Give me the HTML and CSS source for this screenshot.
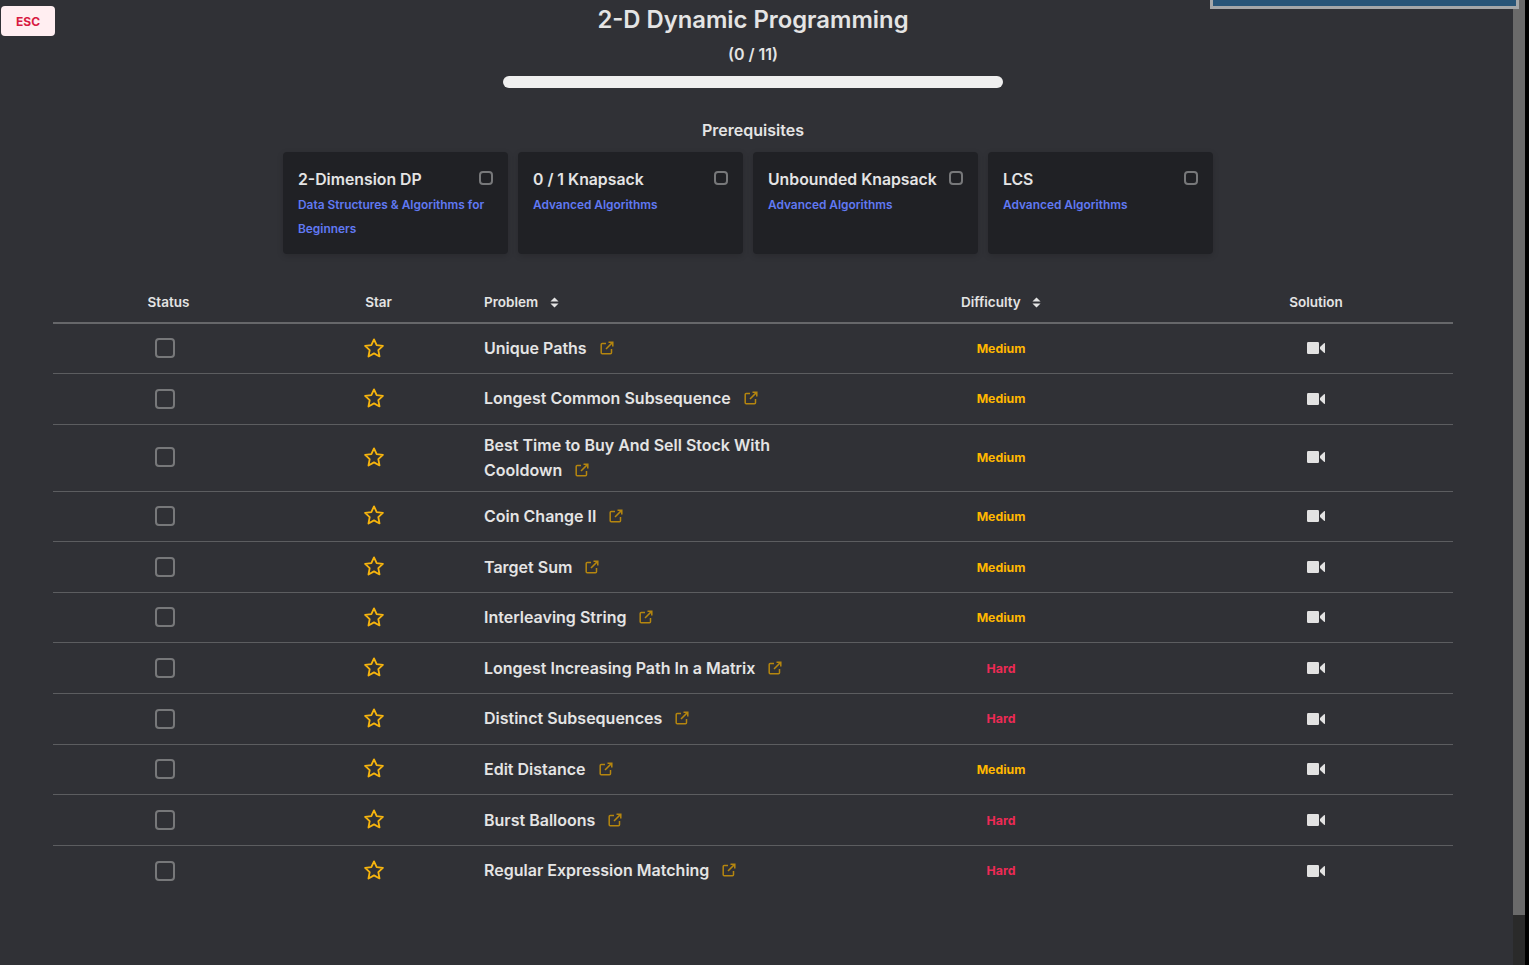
FILE: index.html
```html
<!DOCTYPE html>
<html>
<head>
    <title>2-D Dynamic Programming</title>
    <link rel="stylesheet" href="styles.css">
</head>

<body>
    <button class="esc">ESC</button>

    <div id="main">
        <h1 class="title">2-D Dynamic Programming</h1>
        <div class="count">(0 / 11)</div>
        <div class="progress"></div>

        <h2 class="prereq-title">Prerequisites</h2>
        <div id="prereqs">
            <div class="prereq">
                <div class="prereq-name">2-Dimension DP</div>
                <a class="prereq-course">Data Structures &amp; Algorithms for Beginners</a>
                <span class="prereq-check"></span>
            </div>
            <div class="prereq">
                <div class="prereq-name">0 / 1 Knapsack</div>
                <a class="prereq-course">Advanced Algorithms</a>
                <span class="prereq-check"></span>
            </div>
            <div class="prereq">
                <div class="prereq-name">Unbounded Knapsack</div>
                <a class="prereq-course">Advanced Algorithms</a>
                <span class="prereq-check"></span>
            </div>
            <div class="prereq">
                <div class="prereq-name">LCS</div>
                <a class="prereq-course">Advanced Algorithms</a>
                <span class="prereq-check"></span>
            </div>
        </div>

        <table id="problems">
            <colgroup>
                <col class="col-status">
                <col class="col-star">
                <col class="col-problem">
                <col class="col-difficulty">
                <col class="col-solution">
            </colgroup>
            <thead>
                <tr>
                    <th>Status</th>
                    <th>Star</th>
                    <th class="left">Problem <svg class="sort" viewBox="0 0 10 12"><path d="M5 0.500 9.500 5H0.500zM5 11.500 0.500 7H9.500z"/></svg></th>
                    <th>Difficulty <svg class="sort" viewBox="0 0 10 12"><path d="M5 0.500 9.500 5H0.500zM5 11.500 0.500 7H9.500z"/></svg></th>
                    <th>Solution</th>
                </tr>
            </thead>
            <tbody id="rows"></tbody>
        </table>
    </div>

    <div class="scrollbar"><div class="scrollbar-thumb"></div></div>
    <div class="video-box"></div>

    <script>
        const problems = [
            ["Unique Paths", "Medium"],
            ["Longest Common Subsequence", "Medium"],
            ["Best Time to Buy And Sell Stock With Cooldown", "Medium"],
            ["Coin Change II", "Medium"],
            ["Target Sum", "Medium"],
            ["Interleaving String", "Medium"],
            ["Longest Increasing Path In a Matrix", "Hard"],
            ["Distinct Subsequences", "Hard"],
            ["Edit Distance", "Medium"],
            ["Burst Balloons", "Hard"],
            ["Regular Expression Matching", "Hard"]
        ]

        const star = `<svg class="star" viewBox="0 0 24 24"><path d="M12 2.600l2.900 6.200 6.800.9-5 4.700 1.300 6.800-6-3.300-6 3.300 1.300-6.800-5-4.700 6.800-.9z"/></svg>`
        const link = `<svg class="link" viewBox="0 0 14 14"><path d="M6 2.500H2.200a1 1 0 0 0-1 1v8.300a1 1 0 0 0 1 1h8.300a1 1 0 0 0 1-1V8"/><path d="M8.500 1.200h4.300v4.300M12.600 1.400 6 8"/></svg>`
        const video = `<svg class="video" viewBox="0 0 18 12"><rect width="12" height="12" rx="1.200"/><path d="M13 5 17 1.200a.6.6 0 0 1 1 .4v8.800a.6.6 0 0 1-1 .4L13 7z"/></svg>`

        rows.innerHTML = problems.map(([name, level]) => `
            <tr>
                <td><span class="check"></span></td>
                <td>${star}</td>
                <td class="left"><span class="problem">${name}</span>${link}</td>
                <td><span class="level ${level.toLowerCase()}">${level}</span></td>
                <td>${video}</td>
            </tr>
        `).join('')
    </script>
</body>
</html>
```

FILE: styles.css
```css
html, body {
    height: 100%;
}

body {
    margin: 0;
    overflow: hidden;
    font-family: Inter, "Liberation Sans", sans-serif;
    background-color: #303136;
    color: #e4e4e4;
}

#main {
    display: flex;
    flex-direction: column;
    align-items: center;
    width: 1506px;
}

.esc {
    position: absolute;
    left: 1px;
    top: 6px;
    width: 54px;
    height: 30px;
    padding: 0;
    border: none;
    border-radius: 4px;
    background-color: #ffeef1;
    color: #d81a42;
    font-family: inherit;
    font-size: 12px;
    font-weight: 700;
}

.video-box {
    position: absolute;
    left: 1210px;
    top: -22px;
    box-sizing: border-box;
    width: 309px;
    height: 31px;
    border: 3px solid #a5a7a9;
    background-color: #285578;
}

.title {
    margin: 5px 0 0;
    font-size: 23.800px;
    line-height: 30px;
    font-weight: 600;
}

.count {
    margin-top: 10px;
    font-size: 16px;
    line-height: 19px;
    font-weight: 600;
}

.progress {
    width: 500px;
    height: 12px;
    margin-top: 12px;
    border-radius: 6px;
    background-color: #efefef;
}

.prereq-title {
    margin: 32px 0 0;
    font-size: 16px;
    line-height: 20px;
    font-weight: 600;
}

#prereqs {
    display: flex;
    column-gap: 10px;
    margin-top: 12px;
    margin-right: 10px;
}

.prereq {
    position: relative;
    box-sizing: border-box;
    width: 225px;
    height: 102px;
    padding: 15px;
    border-radius: 4px;
    background-color: #202125;
    box-shadow: 0 2px 6px rgba(0, 0, 0, 0.15);
}

.prereq-name {
    font-size: 15.800px;
    line-height: 25px;
    font-weight: 600;
}

.prereq-course {
    display: block;
    margin-top: 1px;
    font-size: 11.900px;
    line-height: 24px;
    font-weight: 600;
    color: #6079f3;
}

.prereq-check {
    position: absolute;
    top: 19px;
    right: 15px;
    box-sizing: border-box;
    width: 14px;
    height: 14px;
    border: 2px solid #77787a;
    border-radius: 4px;
}

#problems {
    width: 1400px;
    margin-top: 29px;
    table-layout: fixed;
    border-collapse: collapse;
}

.col-status { width: 231px; }
.col-star { width: 189px; }
.col-problem { width: 350px; }
.col-difficulty { width: 356px; }
.col-solution { width: 274px; }

th {
    height: 40px;
    padding: 0 0 2px;
    box-sizing: border-box;
    border-bottom: 2px solid #66676a;
    font-size: 13.500px;
    font-weight: 600;
    text-align: center;
}

td {
    height: 50.600px;
    padding: 8px 0;
    box-sizing: border-box;
    border-bottom: 1px solid #5c5d60;
    text-align: center;
    font-size: 16px;
    line-height: 25px;
}

tr:last-child td {
    border-bottom: none;
}

th.left, td.left {
    padding-left: 11px;
    text-align: left;
}

.sort {
    width: 9px;
    height: 11px;
    margin-left: 8px;
    vertical-align: -1px;
    fill: #e4e4e4;
}

.check {
    display: inline-block;
    box-sizing: border-box;
    width: 20px;
    height: 20px;
    margin-right: 7px;
    vertical-align: -4.200px;
    border: 2px solid #77787a;
    border-radius: 4px;
}

.star {
    width: 22px;
    height: 22px;
    margin-right: 9px;
    vertical-align: -4.500px;
    fill: none;
    stroke: #f6b40e;
    stroke-width: 2;
    stroke-linejoin: round;
}

.problem {
    font-weight: 600;
}

.link {
    width: 14px;
    height: 14px;
    margin-left: 13px;
    vertical-align: -1px;
    fill: none;
    stroke: #b5860f;
    stroke-width: 1.500;
}

.level {
    font-size: 12.300px;
    font-weight: 700;
    vertical-align: 1px;
}

.medium { color: #ffb800; }
.hard { color: #ee2a55; }

.video {
    width: 18px;
    height: 12px;
    vertical-align: -0.300px;
    fill: #e2e2e2;
}

.scrollbar {
    position: absolute;
    left: 1513px;
    top: 0;
    width: 12px;
    height: 965px;
    border-right: 4px solid #000;
    background-color: #2a2a2a;
}

.scrollbar-thumb {
    height: 915px;
    background-color: #6a6a6a;
}
```
